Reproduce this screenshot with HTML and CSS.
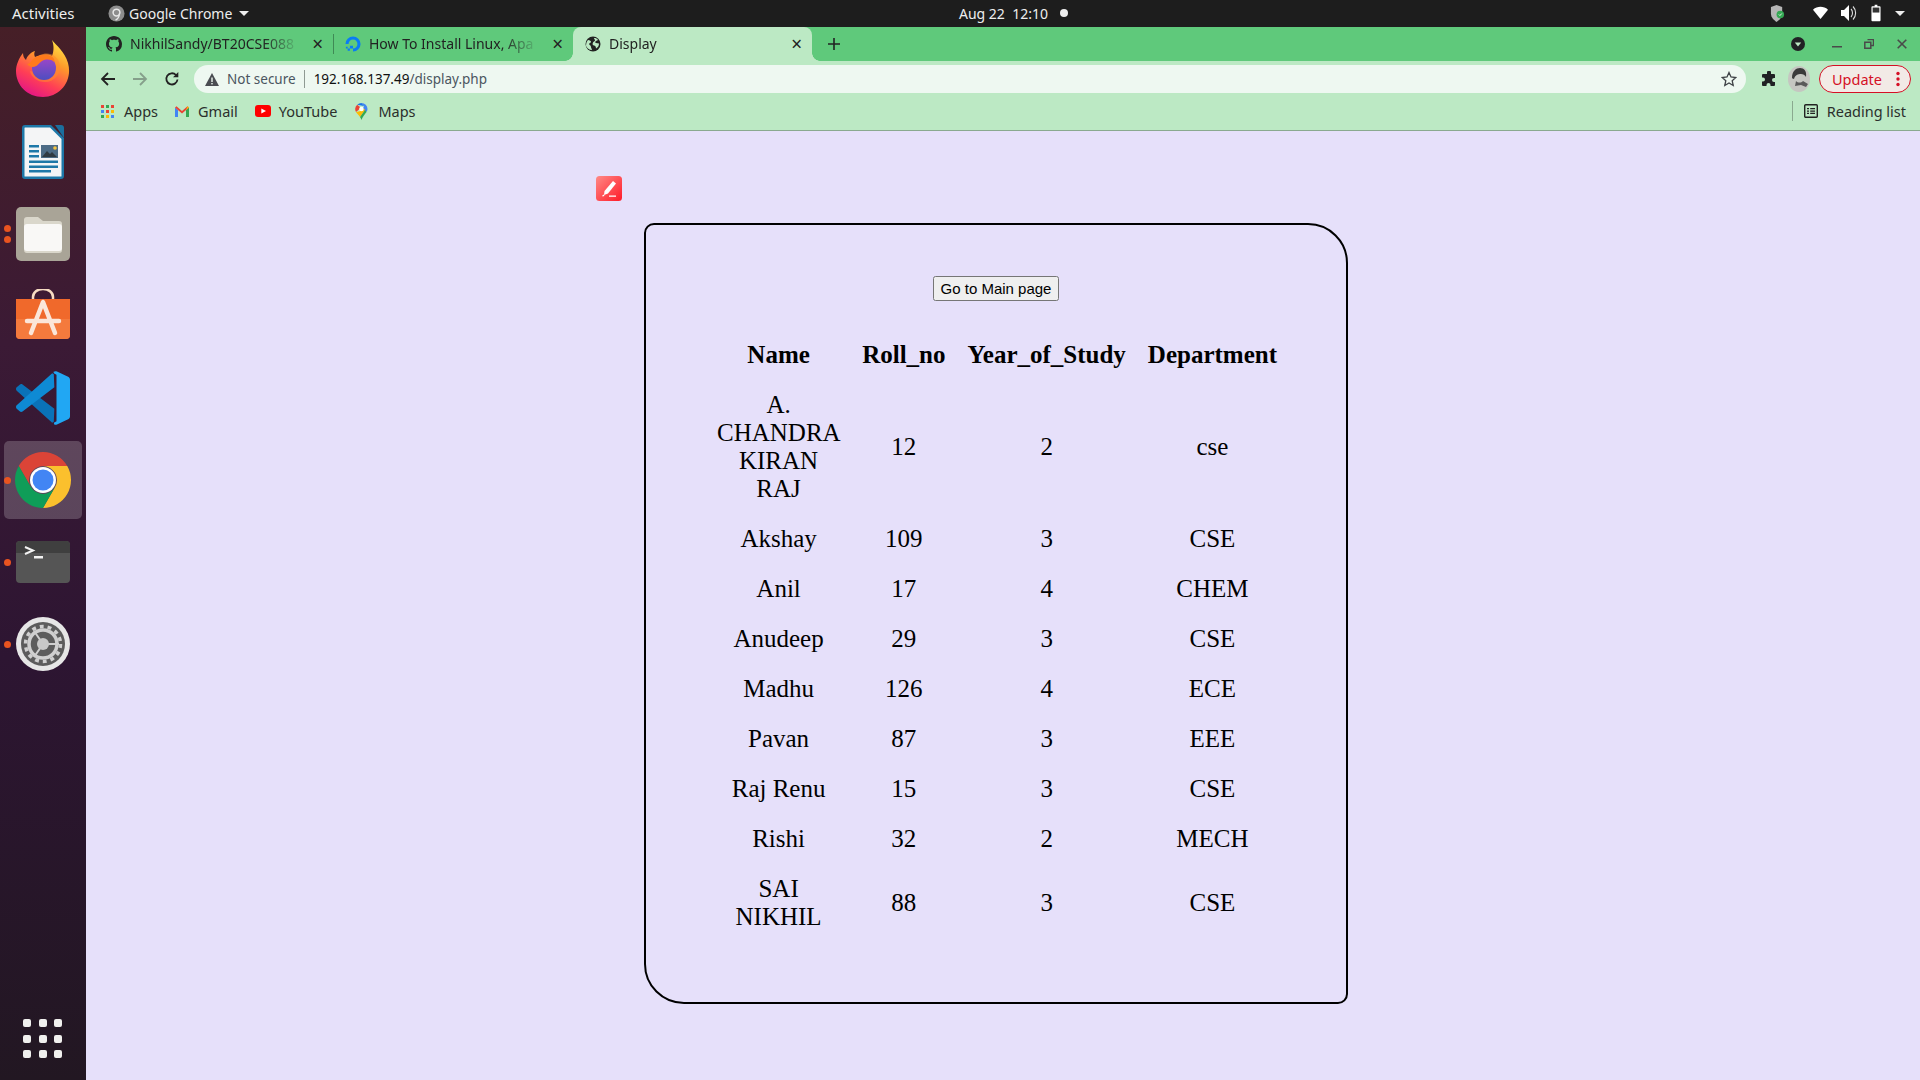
FILE: index.html
```html
<!DOCTYPE html>
<html lang="en">
<head>
<meta charset="utf-8">
<title>Display</title>
<link rel="stylesheet" href="styles.css">
</head>
<body>
<header class="topbar">
  <span class="activities">Activities</span>
  <span class="app-menu">
    <svg class="app-icon" viewBox="0 0 18 18"><circle cx="9" cy="9" r="8.5" fill="#8d8d8d"/><circle cx="9" cy="8" r="3.6" fill="none" stroke="#e8e8e8" stroke-width="1.6"/><path d="M12 9c0 4-2 6-4 7" fill="none" stroke="#e8e8e8" stroke-width="1.4"/></svg>
    Google Chrome
    <i class="caret"></i>
  </span>
  <span class="clock">Aug 22&nbsp; 12:10</span>
  <i class="clock-dot"></i>
  <span class="tray">
    <svg class="tray-shield" viewBox="0 0 16 20"><path d="M7 1l6 2v7c0 4-3 7-6 9-3-2-6-5-6-9V3z" fill="#b5b5b5"/><circle cx="11" cy="11" r="4" fill="#34a853"/><path d="M9.4 11l1.2 1.2 2-2.2" fill="none" stroke="#fff" stroke-width=".9"/></svg>
    <svg class="tray-wifi" viewBox="0 0 16 14"><path d="M0 3.5C4.500-.6 11.500-.6 16 3.500L8 13.500z" fill="#fff"/></svg>
    <svg class="tray-vol" viewBox="0 0 16 18"><path d="M0 6h3l5-5v16l-5-5H0z" fill="#fff"/><path d="M10 5c2 2 2 6 0 8M12 2.500c3.500 3.500 3.500 9.500 0 13" fill="none" stroke="#ddd" stroke-width="1.100"/></svg>
    <svg class="tray-batt" viewBox="0 0 11 18"><path d="M4 0h3v1.500h2.500a1 1 0 0 1 1 1V17a1 1 0 0 1-1 1h-8a1 1 0 0 1-1-1V2.500a1 1 0 0 1 1-1H4z" fill="#fff"/><rect x="1.800" y="3" width="7.400" height="5.500" fill="#333"/></svg>
    <i class="caret tray-caret"></i>
  </span>
</header>

<div class="desktop">
  <nav class="dock">
    <div class="dock-item">
      <svg class="dock-svg firefox" viewBox="0 0 54 57">
        <defs>
          <linearGradient id="ff1" x1="0.800" y1="0" x2="0.300" y2="1"><stop offset="0" stop-color="#ffe847"/><stop offset=".35" stop-color="#ff9a2a"/><stop offset=".7" stop-color="#ff3f55"/><stop offset="1" stop-color="#e31587"/></linearGradient>
          <linearGradient id="ff2" x1="0.500" y1="0" x2="0.500" y2="1"><stop offset="0" stop-color="#a445c9"/><stop offset="1" stop-color="#4d4ec0"/></linearGradient>
        </defs>
        <path d="M36 0c4 5 13 12 16 23 5 18-8 34-25 34C11 57 0 45 0 31c0-6 3-13 7-18 0 3 1 5 3 7 1-4 5-8 9-9-1 2-1 4 0 6 5-2 12-4 17-1 2-5 2-11 0-16z" fill="url(#ff1)"/>
        <path d="M24 15c8-4 19 0 20 11 1 8-6 16-15 16-8 0-14-5-15-11 3 1 6 0 8-2-2-1-5-1-7-3 2-5 5-9 9-11z" fill="#ff8a2b" opacity=".55"/>
        <circle cx="28" cy="28" r="12" fill="url(#ff2)"/>
        <path d="M16 20c4-4 12-7 19-4 3 2 4 4 3 6-3-3-8-3-12-1-3 2-5 6-9 6-3 0-5-2-6-3 2 0 4-2 5-4z" fill="#ff7a1c"/>
      </svg>
    </div>
    <div class="dock-item">
      <svg class="dock-svg writer" viewBox="0 0 42 54">
        <path d="M3 0h26l13 13v38a3 3 0 0 1-3 3H3a3 3 0 0 1-3-3V3a3 3 0 0 1 3-3z" fill="#1d78a8"/>
        <path d="M3 2.500h25L39.500 14v37a.5.5 0 0 1-.5.5H3a.5.5 0 0 1-.5-.5V3a.5.5 0 0 1 .5-.5z" fill="#f4f5f6"/>
        <path d="M33 0h6a3 3 0 0 1 3 3v10z" fill="#1b6f9e"/>
        <path d="M7 20h10v2.500H7zM7 25h10v2.500H7zM7 30h10v2.500H7zM7 35.500h29V38H7zM7 40.500h29V43H7zM7 45h22v2.500H7z" fill="#1d78a8"/>
        <rect x="19" y="20" width="17" height="13" fill="#4c6b85"/>
        <path d="M20 32l5-6 3 3 2-2 5 5z" fill="#2f3a42"/><circle cx="33" cy="23" r="1.800" fill="#f3c441"/>
      </svg>
    </div>
    <div class="dock-item">
      <i class="run-dots"><b></b><b></b></i>
      <svg class="dock-svg files" viewBox="0 0 54 54">
        <rect width="54" height="54" rx="5" fill="#a9a497"/>
        <path d="M8 13a3 3 0 0 1 3-3h11l5 4h16a3 3 0 0 1 3 3v26a3 3 0 0 1-3 3H11a3 3 0 0 1-3-3z" fill="#dad7cb"/>
        <path d="M8 20a3 3 0 0 1 3-3h32a3 3 0 0 1 3 3v21a3 3 0 0 1-3 3H11a3 3 0 0 1-3-3z" fill="#f9f8f6"/>
      </svg>
    </div>
    <div class="dock-item">
      <svg class="dock-svg store" viewBox="0 0 54 54">
        <path d="M17 12V8a10 8 0 0 1 20 0v4" fill="none" stroke="#f7dcc2" stroke-width="2.500"/>
        <path d="M0 10h54v36a4 4 0 0 1-4 4H4a4 4 0 0 1-4-4z" fill="#f0692b"/>
        <path d="M0 30h54v16a4 4 0 0 1-4 4H4a4 4 0 0 1-4-4z" fill="#f47a3d"/>
        <path d="M27 13l12 31M27 13L15 44M11 32h32" fill="none" stroke="#fbe6d9" stroke-width="4.500" stroke-linecap="round"/>
      </svg>
    </div>
    <div class="dock-item">
      <svg class="dock-svg vscode" viewBox="0 0 100 100">
        <path d="M1.300 30.300l5.500-5c1.500-1.300 3.700-1.400 5.300-.2L71 70l-1 24-3 2L1.300 36.400c-1.800-1.600-1.800-4.500 0-6.100z" fill="#0a72b8"/>
        <path d="M1.300 69.700l5.500 5c1.500 1.300 3.700 1.400 5.300.2L71 30l-1-24-3-2L1.300 63.600c-1.800 1.600-1.800 4.500 0 6.100z" fill="#0e8ad4"/>
        <path d="M70.900 99.300c1.600.6 3.400.6 5-.2l20.600-9.900c2.200-1 3.500-3.200 3.500-5.600V16.400c0-2.400-1.400-4.600-3.500-5.600L75.900.9c-2.100-1-4.500-.8-6.400.6L70 4l5 3v86l-5 3z" fill="#21a7f3"/>
      </svg>
    </div>
    <div class="dock-item is-active">
      <i class="run-dots"><b></b></i>
      <svg class="dock-svg chrome" viewBox="0 0 56 56">
        <path d="M3.750 14A28 28 0 0 1 52.250 14H28A14 14 0 0 0 15.900 35Z" fill="#db4437"/>
        <path d="M52.250 14A28 28 0 0 1 28 56L40.100 35A14 14 0 0 0 28 14Z" fill="#fbc02d"/>
        <path d="M28 56A28 28 0 0 1 3.750 14L15.900 35A14 14 0 0 0 40.100 35Z" fill="#0f9d58"/>
        <circle cx="28" cy="28" r="13" fill="#fff"/><circle cx="28" cy="28" r="10.500" fill="#4285f4"/>
      </svg>
    </div>
    <div class="dock-item">
      <i class="run-dots"><b></b></i>
      <svg class="dock-svg terminal" viewBox="0 0 54 42">
        <path d="M4 0h46a4 4 0 0 1 4 4v34a4 4 0 0 1-4 4H4a4 4 0 0 1-4-4V4a4 4 0 0 1 4-4z" fill="#555"/>
        <path d="M0 4a4 4 0 0 1 4-4h46a4 4 0 0 1 4 4v8H0z" fill="#3f3f3f"/>
        <path d="M9 6l8 3.500-8 3.500" fill="none" stroke="#f2f2f2" stroke-width="2"/>
        <rect x="18" y="15" width="9" height="2.500" fill="#f2f2f2"/>
      </svg>
    </div>
    <div class="dock-item">
      <i class="run-dots"><b></b></i>
      <svg class="dock-svg settings" viewBox="0 0 54 54">
        <circle cx="27" cy="27" r="27" fill="#e6e6e6"/><circle cx="27" cy="27" r="22" fill="#5c5c5c"/>
        <circle cx="27" cy="27" r="17.500" fill="none" stroke="#cfcfcf" stroke-width="3.500" stroke-dasharray="3.900 3.970"/>
        <circle cx="27" cy="27" r="14" fill="none" stroke="#cfcfcf" stroke-width="3.500"/>
        <path d="M27 27L18 14M27 27l16 0M27 27l-9 13" stroke="#cfcfcf" stroke-width="2"/>
        <circle cx="27" cy="27" r="6" fill="#c8c8c8"/>
      </svg>
    </div>
    <div class="show-apps"><b></b><b></b><b></b><b></b><b></b><b></b><b></b><b></b><b></b></div>
  </nav>

  <div class="browser">
    <div class="tabstrip">
      <div class="tab tab-first">
        <svg class="fav" viewBox="0 0 16 16"><path fill="#222" d="M8 0C3.580 0 0 3.580 0 8c0 3.540 2.290 6.530 5.470 7.590.4.070.55-.17.550-.38 0-.19-.01-.82-.01-1.490-2.010.370-2.530-.490-2.690-.940-.090-.230-.480-.940-.820-1.130-.280-.150-.680-.520-.010-.530.630-.010 1.080.580 1.230.820.720 1.210 1.870.870 2.330.660.070-.520.280-.870.510-1.070-1.780-.200-3.640-.890-3.640-3.950 0-.870.310-1.590.820-2.150-.080-.200-.360-1.020.080-2.120 0 0 .670-.210 2.200.820.640-.180 1.320-.270 2-.270s1.360.090 2 .270c1.530-1.040 2.200-.820 2.200-.820.440 1.100.160 1.920.080 2.120.510.560.820 1.270.820 2.150 0 3.070-1.870 3.750-3.650 3.950.290.250.540.730.540 1.480 0 1.070-.010 1.930-.010 2.200 0 .210.150.460.550.380A8.010 8.010 0 0 0 16 8c0-4.420-3.580-8-8-8z"/></svg>
        <span class="tab-title">NikhilSandy/BT20CSE088</span>
        <span class="tab-x">×</span>
      </div>
      <i class="tab-sep"></i>
      <div class="tab tab-second">
        <svg class="fav" viewBox="0 0 18 18"><path d="M9 17.500V14a5 5 0 1 0-5-5H.500a8.500 8.500 0 1 1 8.500 8.500z" fill="#0a7cf5"/><path d="M5.500 14H9v-3H5.500zM3 16.500h2.500V14H3zM1 14h2v-2H1z" fill="#0a7cf5"/></svg>
        <span class="tab-title">How To Install Linux, Apa</span>
        <span class="tab-x">×</span>
      </div>
      <div class="tab tab-active">
        <svg class="fav" viewBox="0 0 16 16"><circle cx="8" cy="8" r="7.500" fill="#222"/><path d="M3 4c2 0 3 1 3 2s-2 1-2 2 2 1 2 3c0 1 1 2 1 3-3 0-5-2-6-4 0-3 1-5 2-6zM9 2c2 0 3 .5 4 2l-2 1c-1 .5-1 2 0 2l3 .5c0 2-1 4-3 5 0-2-1-3-2-3s-2-1-1-3c0-1 2-1 2-2S9 3 9 2z" fill="#bce9c4"/></svg>
        <span class="tab-title">Display</span>
        <span class="tab-x">×</span>
      </div>
      <span class="new-tab">
        <svg viewBox="0 0 12 12"><path d="M6 0v12M0 6h12" stroke="#222" stroke-width="1.600"/></svg>
      </span>
      <span class="win-controls">
        <svg class="tab-search" viewBox="0 0 14 14"><circle cx="7" cy="7" r="7" fill="#202124"/><path d="M3.800 5.500h6.400L7 9.500z" fill="#bce9c4"/></svg>
        <svg class="win-min" viewBox="0 0 10 10"><rect y="7" width="10" height="1.500" fill="#4a4a4a"/></svg>
        <svg class="win-max" viewBox="0 0 10 10"><path d="M3.500.5h6v6h-2M.8 3.200h6v6h-6z" fill="none" stroke="#4a4a4a" stroke-width="1.500"/></svg>
        <svg class="win-close" viewBox="0 0 10 10"><path d="M.7.7l8.600 8.600M9.300.7L.7 9.300" stroke="#4a4a4a" stroke-width="1.600"/></svg>
      </span>
    </div>

    <div class="toolbar">
      <svg class="nav-btn" viewBox="0 0 16 16"><path d="M15 8H2M8 2L2 8l6 6" fill="none" stroke="#222" stroke-width="1.800"/></svg>
      <svg class="nav-btn" viewBox="0 0 16 16"><path d="M1 8h13M8 2l6 6-6 6" fill="none" stroke="#859f8b" stroke-width="1.800"/></svg>
      <svg class="nav-btn" viewBox="0 0 16 16"><path d="M13.500 8.500A5.600 5.600 0 1 1 12 4" fill="none" stroke="#222" stroke-width="1.800"/><path d="M14.300 1v5.300H9z" fill="#222"/></svg>
      <div class="omnibox">
        <svg class="warn" viewBox="0 0 14 13"><path d="M7 0l7 13H0z" fill="#4a4d52"/><rect x="6.300" y="4.500" width="1.400" height="4.500" fill="#eef8f1"/><rect x="6.300" y="10" width="1.400" height="1.400" fill="#eef8f1"/></svg>
        <span class="not-secure">Not secure</span>
        <i class="omni-sep"></i>
        <span class="url"><b>192.168.137.49</b>/display.php</span>
        <svg class="star" viewBox="0 0 16 16"><path d="M8 1.500l2 4.500 4.800.5-3.600 3.200 1 4.800L8 12l-4.200 2.500 1-4.800L1.200 6.500 6 6z" fill="none" stroke="#3f4347" stroke-width="1.300"/></svg>
      </div>
      <svg class="puzzle" viewBox="0 0 16 16"><path d="M6 1.500a2 2 0 0 1 4 0V3h3a1 1 0 0 1 1 1v3h-1a2 2 0 0 0 0 4h1v3a1 1 0 0 1-1 1H9.500v-1a2 2 0 0 0-4 0v1H2a1 1 0 0 1-1-1v-3.500h1a2 2 0 0 0 0-4H1V4a1 1 0 0 1 1-1h4z" fill="#202124"/></svg>
      <svg class="avatar" viewBox="0 0 22 26"><ellipse cx="11" cy="13" rx="11" ry="13" fill="#c5c6c1"/><path d="M4 12c0-7 4-10 8-10s7 3 6 9c-1-2-3-3-5-3-3 0-6 1-7 5-1 0-2-1-2-1z" fill="#3a3a3a"/><path d="M8 15c2 2 5 2 7 0l5 3-2 3-5-2-6 1z" fill="#5a5a5a"/></svg>
      <div class="update"><span>Update</span><svg viewBox="0 0 4 16"><circle cx="2" cy="2.500" r="1.700" fill="#d50f25"/><circle cx="2" cy="8" r="1.700" fill="#d50f25"/><circle cx="2" cy="13.500" r="1.700" fill="#d50f25"/></svg></div>
    </div>

    <div class="bookmarks">
      <span class="bm bm-apps">
        <svg viewBox="0 0 13 13"><path d="M0 0h3v3H0z" fill="#ea4335"/><path d="M5 0h3v3H5z" fill="#34a853"/><path d="M10 0h3v3h-3z" fill="#ea4335"/><path d="M0 5h3v3H0z" fill="#4285f4"/><path d="M5 5h3v3H5z" fill="#ea4335"/><path d="M10 5h3v3h-3z" fill="#fbbc04"/><path d="M0 10h3v3H0z" fill="#34a853"/><path d="M5 10h3v3H5z" fill="#fbbc04"/><path d="M10 10h3v3h-3z" fill="#4285f4"/></svg>
        Apps
      </span>
      <span class="bm bm-gmail">
        <svg viewBox="0 0 14 11"><path d="M0 1.500V11h3V4z" fill="#4285f4"/><path d="M14 1.500V11h-3V4z" fill="#34a853"/><path d="M0 1.500L1.500.3 7 5l5.500-4.700L14 1.500 7 7.500z" fill="#ea4335"/><path d="M11 4l1.500-3.700L14 1.500z" fill="#fbbc04"/></svg>
        Gmail
      </span>
      <span class="bm bm-yt">
        <svg viewBox="0 0 16 12"><rect width="16" height="12" rx="3" fill="#f00"/><path d="M6.300 3.400v5.200L11 6z" fill="#fff"/></svg>
        YouTube
      </span>
      <span class="bm bm-maps">
        <svg viewBox="0 0 13 17"><path d="M6.500 0A6 6 0 0 1 12.500 6c0 1-.300 2-.900 2.800L7 8 9 3z" fill="#4285f4"/><path d="M6.500 0a6 6 0 0 0-4.300 1.800L9 3z" fill="#1a73e8"/><path d="M2.200 1.800A6 6 0 0 0 1 9l3-2.500L5 4z" fill="#ea4335"/><path d="M1 9c1 1.800 3 3.500 4 5l5-7-1-1.500-3 2.500z" fill="#fbbc04"/><path d="M5 14c.7 1 1.200 2 1.500 3 .800-2.800 3-5 5-8L10 7z" fill="#34a853"/><circle cx="6.500" cy="6" r="2.200" fill="#fff"/></svg>
        Maps
      </span>
      <i class="bm-sep"></i>
      <span class="bm bm-read">
        <svg viewBox="0 0 14 14"><rect x=".7" y=".7" width="12.600" height="12.600" rx="1" fill="none" stroke="#222" stroke-width="1.400"/><path d="M3 4h2v1.300H3zM6.200 4H11v1.300H6.200zM3 6.400h2v1.300H3zM6.200 6.400H11v1.300H6.200zM3 8.800h2v1.300H3zM6.200 8.800H11v1.300H6.200z" fill="#222"/></svg>
        Reading list
      </span>
    </div>

    <main class="page">
      <svg class="note-icon" viewBox="0 0 26 25">
        <defs><linearGradient id="nt" x1="0" y1="0" x2="1" y2="1"><stop offset="0" stop-color="#ff8a86"/><stop offset="1" stop-color="#ff1a28"/></linearGradient></defs>
        <rect width="26" height="25" rx="3.500" fill="url(#nt)"/>
        <path d="M17 5l3 2.500-8 10-4 1.500.5-4z" fill="#fff"/><path d="M6 20l1.500-1.500 1 1-.7.700H6zM13 19.500h7v1.200h-7z" fill="#fff"/>
      </svg>
      <section class="panel">
        <div class="panel-action"><button class="main-btn" type="button">Go to Main page</button></div>
        <table class="students">
          <thead><tr><th>Name</th><th>Roll_no</th><th>Year_of_Study</th><th>Department</th></tr></thead>
          <tbody>
            <tr><td>A. CHANDRA KIRAN RAJ</td><td>12</td><td>2</td><td>cse</td></tr>
            <tr><td>Akshay</td><td>109</td><td>3</td><td>CSE</td></tr>
            <tr><td>Anil</td><td>17</td><td>4</td><td>CHEM</td></tr>
            <tr><td>Anudeep</td><td>29</td><td>3</td><td>CSE</td></tr>
            <tr><td>Madhu</td><td>126</td><td>4</td><td>ECE</td></tr>
            <tr><td>Pavan</td><td>87</td><td>3</td><td>EEE</td></tr>
            <tr><td>Raj Renu</td><td>15</td><td>3</td><td>CSE</td></tr>
            <tr><td>Rishi</td><td>32</td><td>2</td><td>MECH</td></tr>
            <tr><td>SAI NIKHIL</td><td>88</td><td>3</td><td>CSE</td></tr>
          </tbody>
        </table>
      </section>
    </main>
  </div>
</div>
</body>
</html>
```

FILE: styles.css
```css
* { box-sizing: border-box; }
html, body { margin: 0; height: 100%; }
body {
  width: 1920px; height: 1080px; overflow: hidden;
  display: flex; flex-direction: column;
  font-family: "Noto Sans", "Liberation Sans", sans-serif;
  background: #e6e0fa;
}
i { display: block; font-style: normal; }
svg { display: block; flex: none; }

/* GNOME top bar */
.topbar {
  height: 27px; flex: none; background: #1d1d1d; color: #eee;
  display: flex; align-items: center; font-size: 14px;
  padding: 0 0 1px 12px;
}
.activities { width: 96px; font-size: 15px; }
.app-menu { display: flex; align-items: center; gap: 4px; width: 851px; }
.app-icon { width: 17px; height: 17px; }
.caret { width: 0; height: 0; border: 5px solid transparent; border-top-color: #eee; border-bottom: 0; margin-left: 3px; }
.clock { width: 101px; white-space: nowrap; }
.clock-dot { width: 8px; height: 8px; border-radius: 50%; background: #eee; }
.tray { margin-left: auto; display: flex; align-items: center; padding-right: 15px; }
.tray-shield { width: 15px; height: 19px; margin-right: 28px; }
.tray-wifi { width: 15px; height: 14px; margin-right: 13px; }
.tray-vol { width: 16px; height: 18px; margin-right: 14px; }
.tray-batt { width: 10px; height: 18px; margin-right: 14px; }
.tray-caret { margin-left: 0; }

/* Ubuntu dock */
.desktop { flex: 1; display: flex; min-height: 0; }
.dock {
  width: 86px; flex: none; display: flex; flex-direction: column; gap: 4px;
  padding: 4px 4px 0;
  background: linear-gradient(180deg, #461f27 0%, #3b1a35 30%, #2d1532 60%, #221722 100%);
}
.dock-item { position: relative; height: 78px; display: flex; align-items: center; justify-content: center; border-radius: 5px; }
.dock-item.is-active { background: rgba(255,255,255,.2); }
.run-dots { position: absolute; left: 0; top: 0; bottom: 0; display: flex; flex-direction: column; justify-content: center; gap: 4px; }
.run-dots b { display: block; width: 7px; height: 7px; border-radius: 50%; background: #e95420; }
.dock-svg { width: 54px; height: 54px; }
.firefox { height: 57px; margin-top: -4px; }
.writer { width: 42px; }
.terminal { height: 42px; }
.chrome { width: 56px; height: 56px; }
.show-apps {
  margin-top: auto; margin-bottom: 22px; margin-left: 19px;
  display: grid; grid-template-columns: repeat(3, 8px); gap: 7.5px;
}
.show-apps b { height: 8px; border-radius: 2px; background: #f0f0ee; display: block; }

/* Chrome frame */
.browser { flex: 1; display: flex; flex-direction: column; min-width: 0; }
.tabstrip { height: 34px; flex: none; background: #5fc97b; display: flex; align-items: center; color: #222; font-size: 14px; }
.tab { height: 34px; display: flex; align-items: center; position: relative; }
.tab-first { width: 247px; padding-left: 20px; }
.tab-second { width: 239px; padding-left: 11px; }
.tab-active { width: 239px; padding-left: 12px; background: #bce9c4; border-radius: 8px 8px 0 0; }
.tab-active::before, .tab-active::after { content: ""; position: absolute; bottom: 0; width: 8px; height: 8px; }
.tab-active::before { left: -8px; background: radial-gradient(circle at 0 0, transparent 7.5px, #bce9c4 8px); }
.tab-active::after { right: -8px; background: radial-gradient(circle at 100% 0, transparent 7.5px, #bce9c4 8px); }
.fav { width: 16px; height: 16px; }
.tab-title { margin: -2px 0 0 8px; width: 170px; overflow: hidden; white-space: nowrap;
  -webkit-mask-image: linear-gradient(90deg, #000 78%, transparent); mask-image: linear-gradient(90deg, #000 78%, transparent); }
.tab-x { position: absolute; right: 10px; top: 6px; font-size: 19px; line-height: 22px; color: #222; }
.tab-sep { width: 1px; height: 20px; background: #3f8a55; }
.new-tab { margin-left: 16px; }
.new-tab svg { width: 12px; height: 12px; }
.win-controls { margin-left: auto; display: flex; align-items: center; padding-right: 13px; }
.tab-search { width: 14px; height: 14px; margin-right: 27px; }
.win-min { width: 10px; height: 10px; margin-right: 22px; }
.win-max { width: 10px; height: 10px; margin-right: 23px; }
.win-close { width: 10px; height: 10px; }

.toolbar { height: 36px; flex: none; background: #bce9c4; display: flex; align-items: flex-start; padding: 4px 8px 0 14px; }
.nav-btn { width: 16px; height: 16px; margin: 6px 16px 0 0; }
.omnibox {
  height: 28px; width: 1552px; margin-left: -2px; border-radius: 14px; background: #eef8f1;
  display: flex; align-items: center; padding-left: 11px; font-size: 13.5px; color: #4b5560;
}
.warn { width: 14px; height: 13px; }
.not-secure { margin-left: 8px; margin-top: -1px; }
.omni-sep { width: 1px; height: 18px; background: #8f9a93; margin-left: 8px; }
.url { margin-left: 9px; margin-top: -1px; }
.url b { font-weight: 400; color: #111; }
.star { width: 16px; height: 16px; margin-left: auto; margin-right: 9px; }
.puzzle { width: 16px; height: 16px; margin: 6px 0 0 15px; }
.avatar { width: 22px; height: 26px; margin: 1px 0 0 11px; }
.update {
  height: 28px; width: 92px; margin-left: 9px; border: 1px solid #d50f25; border-radius: 14px;
  background: #f2eae6; color: #d50f25; font-size: 14.5px;
  display: flex; align-items: center; padding-left: 12px;
}
.update svg { width: 4px; height: 16px; margin-left: auto; margin-right: 10px; }

.bookmarks { height: 34px; flex: none; background: #bce9c4; border-bottom: 1px solid #8aa98f; display: flex; align-items: center; font-size: 14.5px; color: #2b2f2c; padding: 0 0 5px 15px; }
.bm { display: flex; align-items: center; white-space: nowrap; }
.bm-apps svg { width: 13px; height: 13px; margin-right: 10px; }
.bm-gmail { margin-left: 17px; }
.bm-gmail svg { width: 14px; height: 11px; margin-right: 9px; }
.bm-yt { margin-left: 17px; }
.bm-yt svg { width: 16px; height: 12px; margin-right: 8px; }
.bm-maps { margin-left: 18px; }
.bm-maps svg { width: 13px; height: 17px; margin-right: 10px; }
.bm-sep { margin-left: auto; width: 1px; height: 20px; background: #8aa98f; }
.bm-read { margin-left: 11px; padding-right: 14px; }
.bm-read svg { width: 14px; height: 14px; margin-right: 9px; }

/* Page */
.page { flex: 1; background: #e6e0fa; padding: 45px 0 0 510px; min-height: 0; }
.note-icon { width: 26px; height: 25px; }
.panel {
  width: 704px; height: 781px; margin: 22px 0 0 48px;
  border: 2px solid #000; border-radius: 10px 40px 10px 40px;
  padding-top: 51px;
}
.panel-action { display: flex; justify-content: center; height: 53px; }
.main-btn { font-family: "Liberation Sans", Arial, sans-serif; font-size: 15px; height: 25px; padding: 1px 6px; }
.students {
  font-family: "Liberation Serif", "Times New Roman", serif; color: #000;
  width: 584px; margin: 0 57px 0 59px; font-size: 25px; text-align: center;
  border-spacing: 2px;
}
.students th { padding: 10px; }
.students td { padding: 10px; }
```
